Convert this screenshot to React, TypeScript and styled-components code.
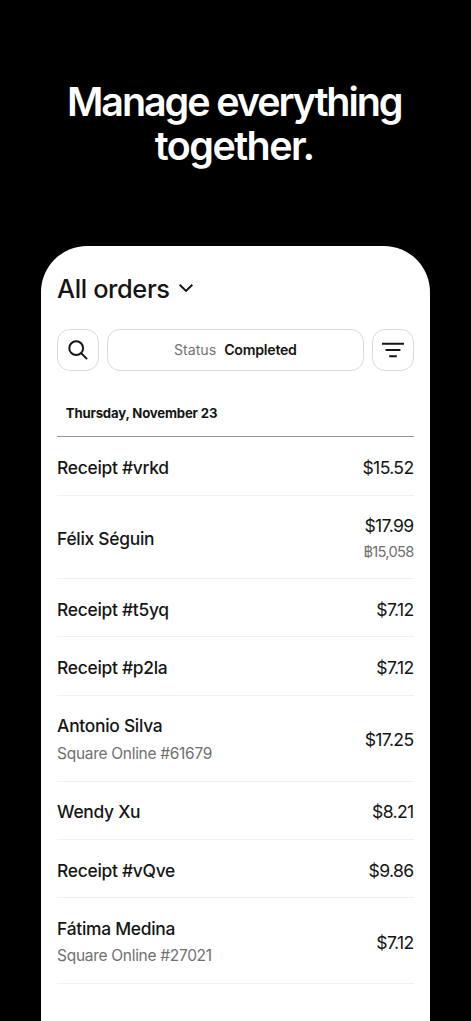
import React from 'react';
import styled, { createGlobalStyle } from 'styled-components';

const GlobalStyle = createGlobalStyle`
  * { box-sizing: border-box; }
  body {
    margin: 0;
    background: #000;
    color: #151515;
    font-family: Inter, 'Liberation Sans', sans-serif;
    overflow: hidden;
  }
`;

const Page = styled.main`
  width: 471px;
  height: 1021px;
  display: flex;
  flex-direction: column;
  align-items: center;
  background: #000;
  overflow: hidden;
`;

const Headline = styled.h1`
  margin: 0;
  height: 246px;
  padding: 80px 2.6px 0 0;
  color: #fff;
  font-size: 39.5px;
  line-height: 44px;
  font-weight: 600;
  text-align: center;
  white-space: nowrap;
`;

const HeadlineLine = styled.span<{ $tracking: number }>`
  display: block;
  letter-spacing: ${({ $tracking }) => $tracking}px;
`;

const Sheet = styled.section`
  width: 389.4px;
  flex: 1;
  padding: 26px 16.7px 0 16.3px;
  background: #fff;
  border-radius: 46px 46px 0 0;
`;

const Title = styled.button`
  display: flex;
  align-items: center;
  gap: 8.6px;
  height: 34px;
  padding: 0;
  border: 0;
  background: none;
  color: #151515;
  font: 500 25.4px/34px Inter, sans-serif;
  letter-spacing: -0.38px;
`;

const Toolbar = styled.div`
  display: grid;
  grid-template-columns: 42px 1fr 42px;
  gap: 8px;
  margin-top: 23px;
`;

const Control = styled.button`
  display: flex;
  align-items: center;
  justify-content: center;
  gap: 8px;
  height: 42px;
  padding: 0;
  border: 1px solid #dadada;
  border-radius: 13px;
  background: #fff;
  color: #151515;
  font: 400 14.2px/20px Inter, sans-serif;
`;

const FilterLabel = styled.span`
  color: #737373;
`;

const FilterValue = styled.span`
  font-weight: 600;
  letter-spacing: -0.27px;
`;

const DayHeader = styled.h2`
  margin: 0;
  height: 66.3px;
  padding: 32px 8.7px 0;
  border-bottom: 1px solid #949494;
  font-size: 13.2px;
  line-height: 20px;
  font-weight: 700;
  letter-spacing: -0.18px;
`;

const OrderList = styled.ul`
  margin: 0;
  padding: 0;
  list-style: none;
`;

const rowHeights = { single: 58.4, converted: 83.4, detailed: 85.7 };

const Row = styled.li<{ $kind: keyof typeof rowHeights }>`
  display: flex;
  align-items: center;
  justify-content: space-between;
  height: ${({ $kind }) => rowHeights[$kind]}px;
  padding-top: 3.8px;
  border-bottom: 1px solid #f0f0f0;
`;

const Stack = styled.div<{ $end?: boolean }>`
  display: flex;
  flex-direction: column;
  align-items: ${({ $end }) => ($end ? 'flex-end' : 'flex-start')};
  gap: ${({ $end }) => ($end ? 2 : 3.4)}px;
`;

const Name = styled.span`
  font-size: 17.4px;
  line-height: 24px;
  font-weight: 500;
  letter-spacing: -0.28px;
`;

const Amount = styled.span`
  font-size: 17.6px;
  line-height: 24px;
  letter-spacing: -0.65px;
`;

const Detail = styled.span`
  color: #707070;
  font-size: 15.5px;
  line-height: 24px;
  letter-spacing: -0.3px;
`;

const Converted = styled.span`
  color: #707070;
  font-size: 14.7px;
  line-height: 24px;
  letter-spacing: -0.75px;
`;

type Order = { name: string; amount: string; detail?: string; converted?: string };

const orders: Order[] = [
  { name: 'Receipt #vrkd', amount: '$15.52' },
  { name: 'Félix Séguin', amount: '$17.99', converted: '฿15,058' },
  { name: 'Receipt #t5yq', amount: '$7.12' },
  { name: 'Receipt #p2la', amount: '$7.12' },
  { name: 'Antonio Silva', amount: '$17.25', detail: 'Square Online #61679' },
  { name: 'Wendy Xu', amount: '$8.21' },
  { name: 'Receipt #vQve', amount: '$9.86' },
  { name: 'Fátima Medina', amount: '$7.12', detail: 'Square Online #27021' },
];

const ChevronIcon = () => (
  <svg width="16" height="16" viewBox="0 0 16 16" fill="none" stroke="currentColor" strokeWidth="2">
    <path d="M1.7 3.7 8 9.9l6.3-6.2" />
  </svg>
);

const SearchIcon = () => (
  <svg width="22" height="22" viewBox="0 0 22 22" fill="none" stroke="currentColor" strokeWidth="2">
    <circle cx="9.2" cy="9.2" r="6.9" />
    <path d="m14.1 14.1 6 6" />
  </svg>
);

const FilterIcon = () => (
  <svg width="22" height="16" viewBox="0 0 22 16" fill="none" stroke="currentColor" strokeWidth="2">
    <path d="M0 1.7h22M3.6 8h14.8M7.2 14.2h7.6" />
  </svg>
);

export default function App() {
  return (
    <>
      <GlobalStyle />
      <Page>
        <Headline>
          <HeadlineLine $tracking={-2.1}>Manage everything</HeadlineLine>
          <HeadlineLine $tracking={-1.6}>together.</HeadlineLine>
        </Headline>
        <Sheet>
          <Title>
            All orders
            <ChevronIcon />
          </Title>
          <Toolbar>
            <Control aria-label="Search">
              <SearchIcon />
            </Control>
            <Control>
              <FilterLabel>Status</FilterLabel>
              <FilterValue>Completed</FilterValue>
            </Control>
            <Control aria-label="Filter">
              <FilterIcon />
            </Control>
          </Toolbar>
          <DayHeader>Thursday, November 23</DayHeader>
          <OrderList>
            {orders.map((o, index) => (
              <Row key={index} $kind={o.detail ? 'detailed' : o.converted ? 'converted' : 'single'}>
                <Stack>
                  <Name>{o.name}</Name>
                  {o.detail && <Detail>{o.detail}</Detail>}
                </Stack>
                <Stack $end>
                  <Amount>{o.amount}</Amount>
                  {o.converted && <Converted>{o.converted}</Converted>}
                </Stack>
              </Row>
            ))}
          </OrderList>
        </Sheet>
      </Page>
    </>
  );
}
